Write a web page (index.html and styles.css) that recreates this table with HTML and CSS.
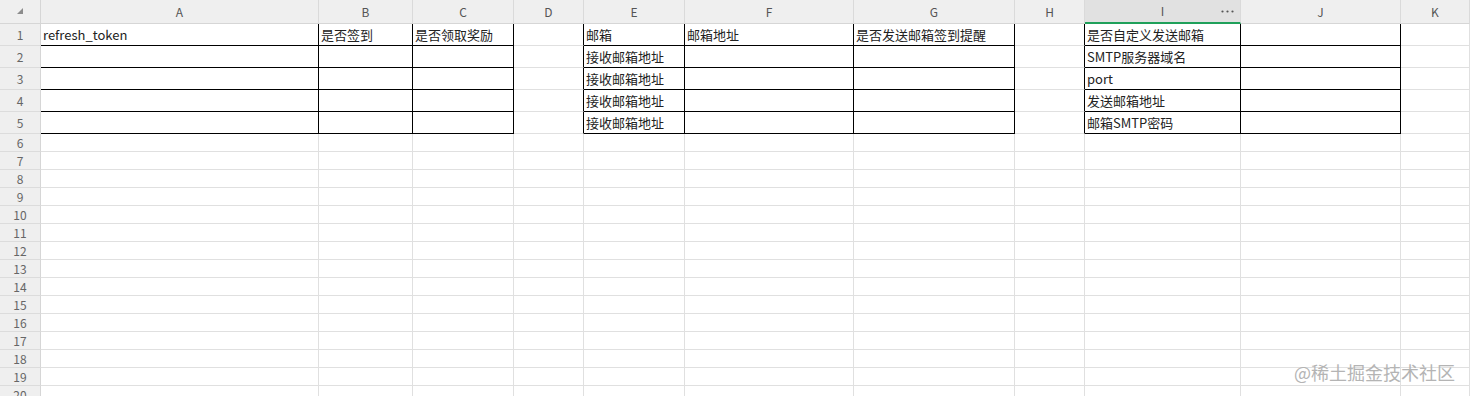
FILE: index.html
```html
<!DOCTYPE html>
<html lang="zh-CN">
<head>
<meta charset="utf-8">
<title>Sheet</title>
<link rel="stylesheet" href="styles.css">
</head>
<body>
<div class="sheet">
  <div class="corner"><span class="tri"></span></div>
  <div class="col">A</div><div class="col">B</div><div class="col">C</div><div class="col">D</div><div class="col">E</div><div class="col">F</div><div class="col">G</div><div class="col">H</div><div class="col sel">I<svg class="dots" width="13" height="3" viewBox="0 0 13 3"><circle cx="1.5" cy="1.5" r="1.1"/><circle cx="6.5" cy="1.5" r="1.1"/><circle cx="11.5" cy="1.5" r="1.1"/></svg></div><div class="col">J</div><div class="col">K</div>

  <div class="num tall">1</div>
  <div class="cell tall box">refresh_token</div><div class="cell tall box">是否签到</div><div class="cell tall box">是否领取奖励</div><div class="cell tall edge"></div><div class="cell tall box">邮箱</div><div class="cell tall box">邮箱地址</div><div class="cell tall box">是否发送邮箱签到提醒</div><div class="cell tall edge"></div><div class="cell tall box">是否自定义发送邮箱</div><div class="cell tall box"></div><div class="cell tall"></div>

  <div class="num tall">2</div>
  <div class="cell tall box"></div><div class="cell tall box"></div><div class="cell tall box"></div><div class="cell tall edge"></div><div class="cell tall box">接收邮箱地址</div><div class="cell tall box"></div><div class="cell tall box"></div><div class="cell tall edge"></div><div class="cell tall box">SMTP服务器域名</div><div class="cell tall box"></div><div class="cell tall"></div>

  <div class="num tall">3</div>
  <div class="cell tall box"></div><div class="cell tall box"></div><div class="cell tall box"></div><div class="cell tall edge"></div><div class="cell tall box">接收邮箱地址</div><div class="cell tall box"></div><div class="cell tall box"></div><div class="cell tall edge"></div><div class="cell tall box">port</div><div class="cell tall box"></div><div class="cell tall"></div>

  <div class="num tall">4</div>
  <div class="cell tall box"></div><div class="cell tall box"></div><div class="cell tall box"></div><div class="cell tall edge"></div><div class="cell tall box">接收邮箱地址</div><div class="cell tall box"></div><div class="cell tall box"></div><div class="cell tall edge"></div><div class="cell tall box">发送邮箱地址</div><div class="cell tall box"></div><div class="cell tall"></div>

  <div class="num tall">5</div>
  <div class="cell tall box"></div><div class="cell tall box"></div><div class="cell tall box"></div><div class="cell tall edge"></div><div class="cell tall box">接收邮箱地址</div><div class="cell tall box"></div><div class="cell tall box"></div><div class="cell tall edge"></div><div class="cell tall box">邮箱SMTP密码</div><div class="cell tall box"></div><div class="cell tall"></div>

  <div class="num">6</div><div class="cell"></div><div class="cell"></div><div class="cell"></div><div class="cell"></div><div class="cell"></div><div class="cell"></div><div class="cell"></div><div class="cell"></div><div class="cell"></div><div class="cell"></div><div class="cell"></div>
  <div class="num">7</div><div class="cell"></div><div class="cell"></div><div class="cell"></div><div class="cell"></div><div class="cell"></div><div class="cell"></div><div class="cell"></div><div class="cell"></div><div class="cell"></div><div class="cell"></div><div class="cell"></div>
  <div class="num">8</div><div class="cell"></div><div class="cell"></div><div class="cell"></div><div class="cell"></div><div class="cell"></div><div class="cell"></div><div class="cell"></div><div class="cell"></div><div class="cell"></div><div class="cell"></div><div class="cell"></div>
  <div class="num">9</div><div class="cell"></div><div class="cell"></div><div class="cell"></div><div class="cell"></div><div class="cell"></div><div class="cell"></div><div class="cell"></div><div class="cell"></div><div class="cell"></div><div class="cell"></div><div class="cell"></div>
  <div class="num">10</div><div class="cell"></div><div class="cell"></div><div class="cell"></div><div class="cell"></div><div class="cell"></div><div class="cell"></div><div class="cell"></div><div class="cell"></div><div class="cell"></div><div class="cell"></div><div class="cell"></div>
  <div class="num">11</div><div class="cell"></div><div class="cell"></div><div class="cell"></div><div class="cell"></div><div class="cell"></div><div class="cell"></div><div class="cell"></div><div class="cell"></div><div class="cell"></div><div class="cell"></div><div class="cell"></div>
  <div class="num">12</div><div class="cell"></div><div class="cell"></div><div class="cell"></div><div class="cell"></div><div class="cell"></div><div class="cell"></div><div class="cell"></div><div class="cell"></div><div class="cell"></div><div class="cell"></div><div class="cell"></div>
  <div class="num">13</div><div class="cell"></div><div class="cell"></div><div class="cell"></div><div class="cell"></div><div class="cell"></div><div class="cell"></div><div class="cell"></div><div class="cell"></div><div class="cell"></div><div class="cell"></div><div class="cell"></div>
  <div class="num">14</div><div class="cell"></div><div class="cell"></div><div class="cell"></div><div class="cell"></div><div class="cell"></div><div class="cell"></div><div class="cell"></div><div class="cell"></div><div class="cell"></div><div class="cell"></div><div class="cell"></div>
  <div class="num">15</div><div class="cell"></div><div class="cell"></div><div class="cell"></div><div class="cell"></div><div class="cell"></div><div class="cell"></div><div class="cell"></div><div class="cell"></div><div class="cell"></div><div class="cell"></div><div class="cell"></div>
  <div class="num">16</div><div class="cell"></div><div class="cell"></div><div class="cell"></div><div class="cell"></div><div class="cell"></div><div class="cell"></div><div class="cell"></div><div class="cell"></div><div class="cell"></div><div class="cell"></div><div class="cell"></div>
  <div class="num">17</div><div class="cell"></div><div class="cell"></div><div class="cell"></div><div class="cell"></div><div class="cell"></div><div class="cell"></div><div class="cell"></div><div class="cell"></div><div class="cell"></div><div class="cell"></div><div class="cell"></div>
  <div class="num">18</div><div class="cell"></div><div class="cell"></div><div class="cell"></div><div class="cell"></div><div class="cell"></div><div class="cell"></div><div class="cell"></div><div class="cell"></div><div class="cell"></div><div class="cell"></div><div class="cell"></div>
  <div class="num">19</div><div class="cell"></div><div class="cell"></div><div class="cell"></div><div class="cell"></div><div class="cell"></div><div class="cell"></div><div class="cell"></div><div class="cell"></div><div class="cell"></div><div class="cell"></div><div class="cell"></div>
  <div class="num">20</div><div class="cell"></div><div class="cell"></div><div class="cell"></div><div class="cell"></div><div class="cell"></div><div class="cell"></div><div class="cell"></div><div class="cell"></div><div class="cell"></div><div class="cell"></div><div class="cell"></div>
</div>
<div class="mark">@稀土掘金技术社区</div>
</body>
</html>
```

FILE: styles.css
```css
* { box-sizing: border-box; margin: 0; padding: 0; }
html, body { width: 1470px; height: 396px; overflow: hidden; background: #fff; }
body { position: relative; font-family: "Noto Sans CJK SC", "Noto Sans", sans-serif; }

.sheet {
  display: grid;
  grid-template-columns: 41px 278px 94px 101px 70px 101px 169px 161px 70px 156px 160px 69px;
  grid-template-rows: 24px repeat(5, 22px) repeat(15, 18px);
}

.corner {
  background: #efefef;
  border-right: 1px solid #d6d6d6;
  border-bottom: 1px solid #d6d6d6;
  display: flex;
  align-items: flex-start;
  justify-content: center;
  padding-top: 8px;
}
.tri {
  width: 0; height: 0;
  border-left: 6px solid transparent;
  border-bottom: 6px solid #8c8c8c;
}

.col {
  background: #efefef;
  border-right: 1px solid #dadada;
  border-bottom: 1px solid #d6d6d6;
  text-align: center;
  font-size: 12px;
  line-height: 23px;
  color: #555;
}
.col.sel {
  position: relative;
  background: #e1e1e1;
  border-bottom: 2px solid #1fa05a;
  line-height: 22px;
}
.dots {
  position: absolute;
  right: 6px;
  top: 10px;
  fill: #555;
}

.num {
  background: #efefef;
  border-right: 1px solid #d6d6d6;
  border-bottom: 1px solid #dcdcdc;
  text-align: center;
  font-size: 12px;
  line-height: 17px;
  color: #666;
}
.num.tall { line-height: 21px; }

.cell {
  border-right: 1px solid #e0e0e0;
  border-bottom: 1px solid #e0e0e0;
  font-size: 13px;
  line-height: 17px;
  color: #222;
  padding-left: 2px;
  white-space: nowrap;
  overflow: hidden;
}
.cell.tall { line-height: 22px; }
.cell.box { border-right-color: #000; border-bottom-color: #000; }
.cell.edge { border-right-color: #000; }

.mark {
  position: absolute;
  left: 1294px;
  top: 359px;
  font-size: 18px;
  color: #b4b4b4;
  white-space: nowrap;
}
```
